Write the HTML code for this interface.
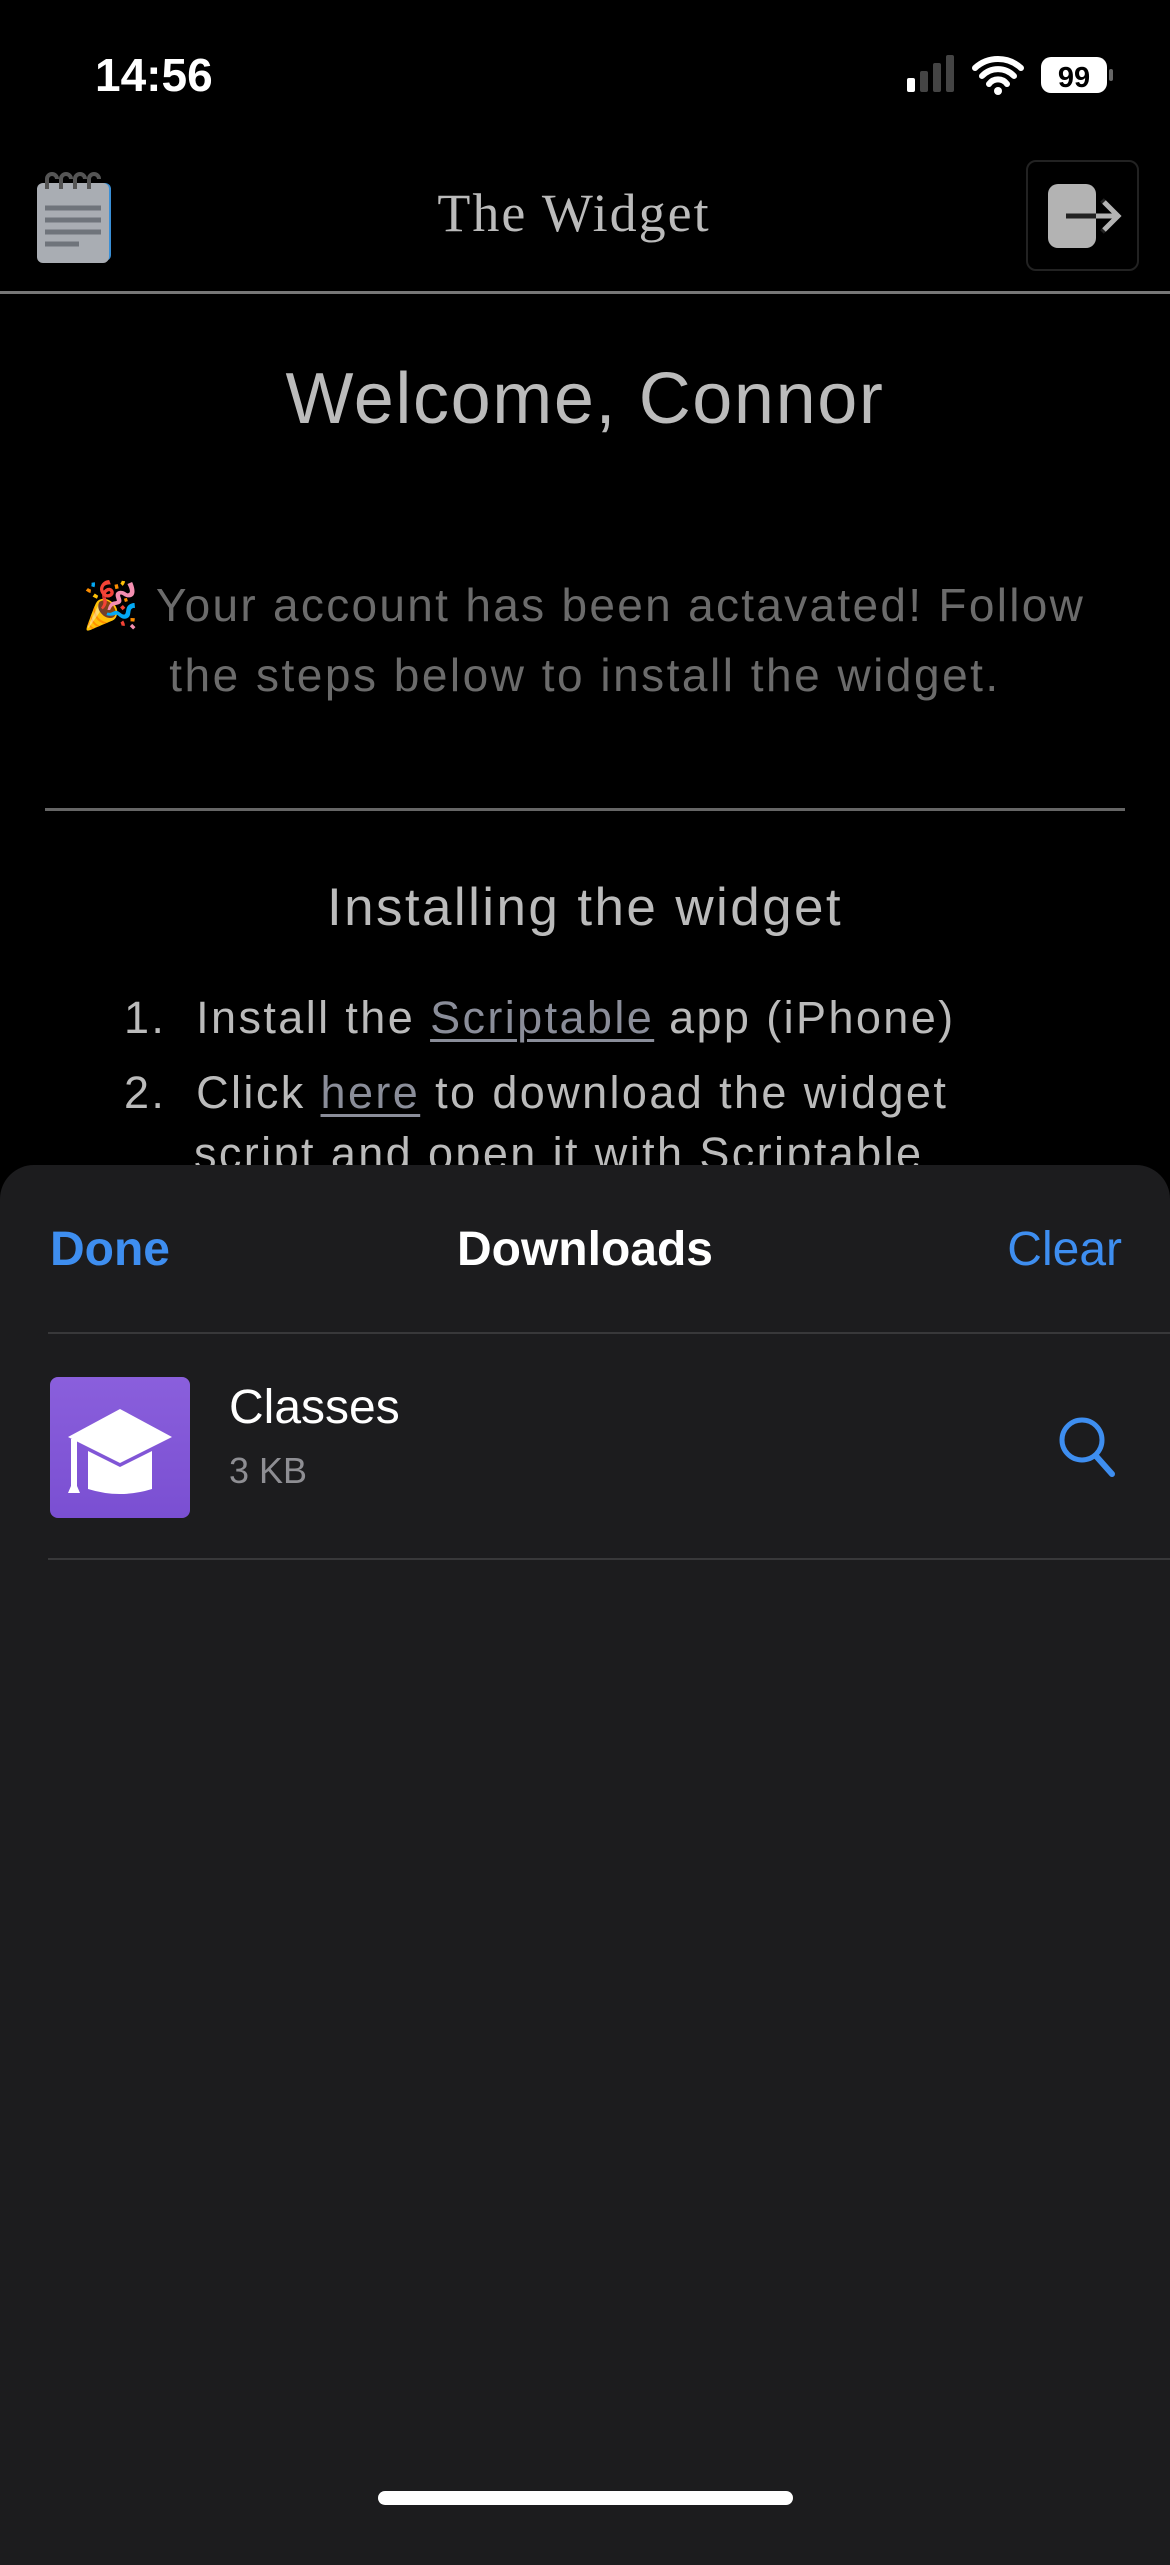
<!DOCTYPE html>
<html><head><meta charset="utf-8"><style>
*{margin:0;padding:0;box-sizing:border-box}
body{width:1170px;height:2532px;background:#000;position:relative;overflow:hidden;font-family:"Liberation Sans",sans-serif}
.a{position:absolute;white-space:nowrap}
.c{left:0;width:1170px;text-align:center}
u{text-decoration-thickness:3px;text-underline-offset:6px;color:#8a8d99}
</style></head><body>
<div class="a" style="left:95px;top:48px;font-size:46px;font-weight:bold;color:#fff">14:56</div>
<svg class="a" style="left:905px;top:52px" width="210" height="44" viewBox="0 0 210 44">
<rect x="2" y="26" width="8" height="14" rx="2" fill="#fff"/>
<rect x="15" y="19" width="8" height="21" rx="2" fill="#444"/>
<rect x="28" y="11" width="8" height="29" rx="2" fill="#444"/>
<rect x="41" y="3" width="8" height="37" rx="2" fill="#444"/>
<path d="M70 16a34 34 0 0 1 46 0M77 24a22 22 0 0 1 32 0M84 32a11 11 0 0 1 18 0" stroke="#fff" stroke-width="6" fill="none" stroke-linecap="round"/>
<circle cx="93" cy="39" r="4" fill="#fff"/>
<rect x="136" y="5" width="66" height="36" rx="10" fill="#fff"/>
<rect x="204" y="17" width="4" height="12" rx="2" fill="#666"/>
<text x="169" y="35" text-anchor="middle" font-size="29" font-weight="bold" fill="#000" font-family="Liberation Sans">99</text>
</svg>
<svg class="a" style="left:37px;top:169px" width="78" height="94" viewBox="0 0 78 94">
<rect x="2" y="14" width="72" height="78" rx="6" fill="#3a8fd6"/>
<rect x="0" y="14" width="72" height="80" rx="6" fill="#a9adb3"/>
<g stroke="#555" stroke-width="4" fill="none"><path d="M10 20v-10a5 5 0 0 1 10 0M24 20v-10a5 5 0 0 1 10 0M38 20v-10a5 5 0 0 1 10 0M52 20v-10a5 5 0 0 1 10 0"/></g>
<g stroke="#6f747b" stroke-width="5"><path d="M8 39h56M8 51h56M8 63h56M8 75h34"/></g>
</svg>
<div class="a c" style="top:182px;left:-11px;font-family:'Liberation Serif',serif;font-size:54px;letter-spacing:2px;color:#bbb">The Widget</div>
<div class="a" style="left:1026px;top:160px;width:113px;height:111px;border:2px solid #222;border-radius:10px;background:#000"></div>
<svg class="a" style="left:1040px;top:180px" width="90" height="72" viewBox="0 0 90 72">
<rect x="8" y="4" width="48" height="64" rx="10" fill="#b3b3b3"/>
<path d="M26 36h52M62 20l16 16-16 16" stroke="#222" stroke-width="5" fill="none"/>
<path d="M56 36h22M64 22l14 14-14 14" stroke="#b3b3b3" stroke-width="5" fill="none"/>
</svg>
<div class="a" style="left:0;top:291px;width:1170px;height:3px;background:#777"></div>
<div class="a c" style="top:358px;font-size:72px;letter-spacing:1.6px;color:#bbb">Welcome, Connor</div>
<div class="a" style="left:82px;top:578px;font-size:46px;letter-spacing:2.3px;color:#6b6b6b">🎉 Your account has been actavated! Follow</div>
<div class="a c" style="top:648px;font-size:46px;letter-spacing:2.5px;color:#6b6b6b">the steps below to install the widget.</div>
<div class="a" style="left:45px;top:808px;width:1080px;height:3px;background:#666"></div>
<div class="a c" style="top:877px;font-size:53px;letter-spacing:2.4px;color:#bbb">Installing the widget</div>
<div class="a" style="left:124px;top:992px;font-size:45px;letter-spacing:2.4px;color:#bbb">1.&nbsp;&nbsp;Install the <u>Scriptable</u> app (iPhone)</div>
<div class="a" style="left:124px;top:1067px;font-size:45px;letter-spacing:2.4px;color:#bbb">2.&nbsp;&nbsp;Click <u>here</u> to download the widget</div>
<div class="a" style="left:194px;top:1128px;font-size:45px;letter-spacing:2.4px;color:#bbb">script and open it with Scriptable</div>
<div class="a" style="left:0;top:1165px;width:1170px;height:1400px;background:#1c1c1e;border-radius:34px 34px 0 0"></div>
<div class="a" style="left:50px;top:1222px;font-size:48px;font-weight:bold;color:#3e8ef0">Done</div>
<div class="a c" style="top:1222px;font-size:48px;font-weight:bold;color:#fff">Downloads</div>
<div class="a" style="right:48px;top:1222px;font-size:48px;color:#3e8ef0">Clear</div>
<div class="a" style="left:48px;top:1332px;width:1122px;height:2px;background:#38383a"></div>
<svg class="a" style="left:50px;top:1377px" width="140" height="141" viewBox="0 0 140 141">
<defs><linearGradient id="g" x1="0" y1="0" x2="0" y2="1"><stop offset="0" stop-color="#8a5fdc"/><stop offset="1" stop-color="#7a4fd2"/></linearGradient></defs>
<rect width="140" height="141" rx="8" fill="url(#g)"/>
<path d="M70 32l52 28-52 26-52-26z" fill="#fff"/>
<path d="M38 74v38q32 10 64 0v-38l-32 16z" fill="#fff"/>
<path d="M24 62v48" stroke="#fff" stroke-width="6"/>
<path d="M18 116l6-14 6 14z" fill="#fff"/>
</svg>
<div class="a" style="left:229px;top:1380px;font-size:48px;color:#fff">Classes</div>
<div class="a" style="left:229px;top:1450px;font-size:36px;color:#8e8e93">3 KB</div>
<svg class="a" style="left:1056px;top:1414px" width="62" height="64" viewBox="0 0 62 64">
<circle cx="26" cy="26" r="20" stroke="#3e8ef0" stroke-width="5" fill="none"/>
<path d="M40 42l16 18" stroke="#3e8ef0" stroke-width="6" stroke-linecap="round"/>
</svg>
<div class="a" style="left:48px;top:1558px;width:1122px;height:2px;background:#38383a"></div>
<div class="a" style="left:378px;top:2491px;width:415px;height:14px;border-radius:7px;background:#fff"></div>
</body></html>
